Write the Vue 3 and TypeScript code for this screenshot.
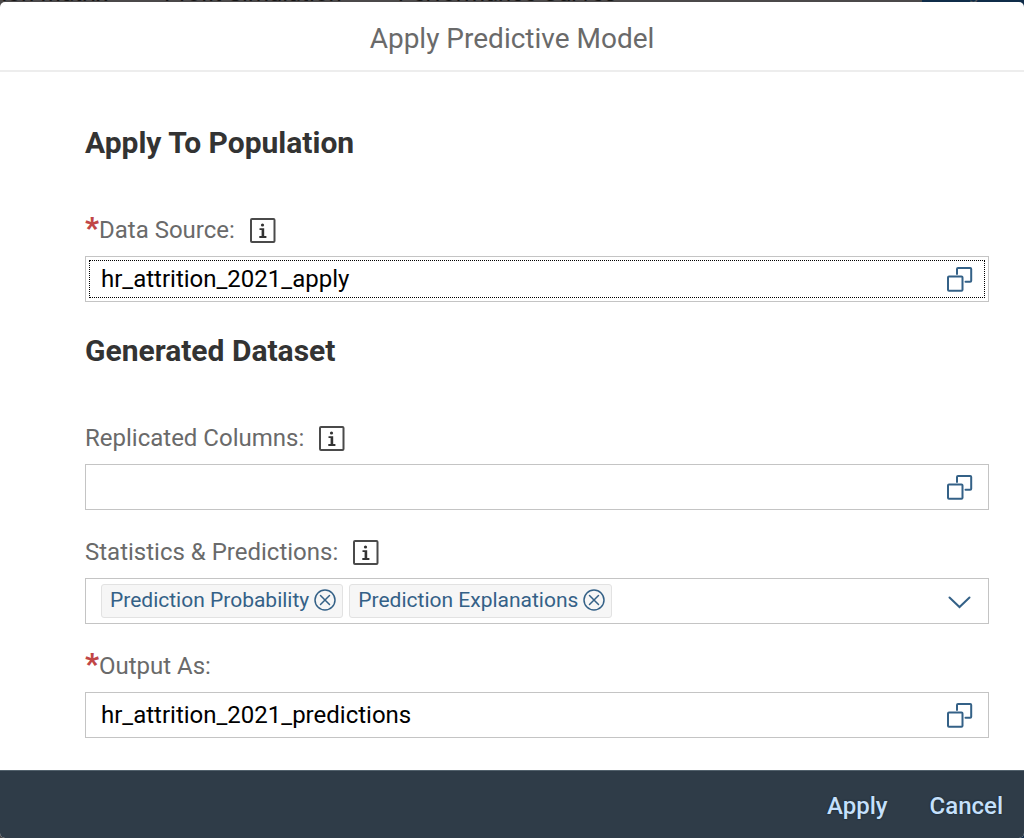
<script setup lang="ts">
import { ref } from 'vue'

interface Token {
  id: number
  text: string
}

const dataSource = ref('hr_attrition_2021_apply')
const replicated = ref('')
const output = ref('hr_attrition_2021_predictions')
const query = ref('')
const tokens = ref<Token[]>([
  { id: 1, text: 'Prediction Probability' },
  { id: 2, text: 'Prediction Explanations' },
])

function removeToken(id: number): void {
  tokens.value = tokens.value.filter((t) => t.id !== id)
}
</script>

<template>
  <div class="page">
    <div class="backdrop" aria-hidden="true">
      <span class="tab tab-first">Confusion Matrix</span>
      <span class="tab">Profit Simulation</span>
      <span class="tab">Performance Curves</span>
      <span class="side">Settings</span>
    </div>

    <form class="dialog" role="dialog" aria-labelledby="dialog-title" @submit.prevent>
      <header class="header">
        <h1 id="dialog-title" class="title">Apply Predictive Model</h1>
      </header>

      <main class="body">
        <section class="section">
          <h2 class="heading">Apply To Population</h2>
          <div class="field">
            <div class="label-row">
              <label for="source"><span class="star">*</span>Data Source:</label>
              <button type="button" class="info" aria-label="About data source">
                <svg viewBox="0 0 26 26" width="26" height="26">
                  <rect class="frame" x="1" y="2" width="23.500" height="23" rx="1" />
                  <circle cx="12.500" cy="8" r="1.600" />
                  <path d="M9.500 11.200h4.700v7.800h2.200v2H9.300v-2h2.300v-5.900H9.500z" />
                </svg>
              </button>
            </div>
            <div class="control focused">
              <input id="source" v-model="dataSource" class="input" type="text" />
              <button type="button" class="action" aria-label="Select data source">
                <svg viewBox="0 0 26 26" width="26" height="26">
                  <path d="M10 8V3a1 1 0 0 1 1-1h12.200a1 1 0 0 1 1 1v11.800a1 1 0 0 1-1 1H18.500" />
                  <rect x="1" y="10.500" width="14.500" height="14.300" rx="1" />
                </svg>
              </button>
            </div>
          </div>
        </section>

        <section class="section">
          <h2 class="heading">Generated Dataset</h2>
          <div class="fields">
            <div class="field">
              <div class="label-row">
                <label for="replicated">Replicated Columns:</label>
                <button type="button" class="info" aria-label="About replicated columns">
                  <svg viewBox="0 0 26 26" width="26" height="26">
                    <rect class="frame" x="1" y="2" width="23.500" height="23" rx="1" />
                    <circle cx="12.500" cy="8" r="1.600" />
                    <path d="M9.500 11.200h4.700v7.800h2.200v2H9.300v-2h2.300v-5.900H9.500z" />
                  </svg>
                </button>
              </div>
              <div class="control">
                <input id="replicated" v-model="replicated" class="input" type="text" />
                <button type="button" class="action" aria-label="Select columns">
                  <svg viewBox="0 0 26 26" width="26" height="26">
                    <path d="M10 8V3a1 1 0 0 1 1-1h12.200a1 1 0 0 1 1 1v11.800a1 1 0 0 1-1 1H18.500" />
                    <rect x="1" y="10.500" width="14.500" height="14.300" rx="1" />
                  </svg>
                </button>
              </div>
            </div>

            <div class="field">
              <div class="label-row">
                <label for="stats">Statistics &amp; Predictions:</label>
                <button type="button" class="info" aria-label="About statistics and predictions">
                  <svg viewBox="0 0 26 26" width="26" height="26">
                    <rect class="frame" x="1" y="2" width="23.500" height="23" rx="1" />
                    <circle cx="12.500" cy="8" r="1.600" />
                    <path d="M9.500 11.200h4.700v7.800h2.200v2H9.300v-2h2.300v-5.900H9.500z" />
                  </svg>
                </button>
              </div>
              <div class="control">
                <ul class="tokens">
                  <li v-for="t in tokens" :key="t.id" class="token">
                    <span>{{ t.text }}</span>
                    <button type="button" class="remove" :aria-label="'Remove ' + t.text" @click="removeToken(t.id)">
                      <svg viewBox="0 0 22 22" width="22" height="22">
                        <circle cx="11" cy="11" r="10" />
                        <path d="M6.500 6.500l9 9M15.500 6.500l-9 9" />
                      </svg>
                    </button>
                  </li>
                </ul>
                <input id="stats" v-model="query" class="input" type="text" />
                <button type="button" class="action" aria-label="Show options">
                  <svg viewBox="0 0 26 26" width="26" height="26">
                    <path d="M2.500 9.500L12.500 19L22.500 9.500" />
                  </svg>
                </button>
              </div>
            </div>

            <div class="field">
              <div class="label-row">
                <label for="output"><span class="star">*</span>Output As:</label>
              </div>
              <div class="control">
                <input id="output" v-model="output" class="input" type="text" />
                <button type="button" class="action" aria-label="Select output location">
                  <svg viewBox="0 0 26 26" width="26" height="26">
                    <path d="M10 8V3a1 1 0 0 1 1-1h12.200a1 1 0 0 1 1 1v11.800a1 1 0 0 1-1 1H18.500" />
                    <rect x="1" y="10.500" width="14.500" height="14.300" rx="1" />
                  </svg>
                </button>
              </div>
            </div>
          </div>
        </section>
      </main>

      <footer class="footer">
        <button type="submit" class="command">Apply</button>
        <button type="button" class="command">Cancel</button>
      </footer>
    </form>
  </div>
</template>

<style>
body {
  margin: 0;
  background: #4b494a;
}
</style>

<style scoped>
.page {
  min-height: 100vh;
  display: grid;
  grid-template-rows: 2px 1fr;
  box-sizing: border-box;
  font-family: Roboto, "Liberation Sans", sans-serif;
  background: linear-gradient(to right, #4b494a 90%, #0f2c49 90%);
}

.backdrop {
  display: flex;
  align-items: flex-end;
  gap: 56px;
  height: 2px;
  overflow: hidden;
  color: #161616;
  font-size: 24px;
  line-height: 18px;
  white-space: nowrap;
}

.tab-first {
  width: 108px;
  display: flex;
  justify-content: flex-end;
}

.side {
  margin-left: auto;
  padding-right: 36px;
  font-size: 18px;
  color: #54585c;
}

.dialog {
  display: flex;
  flex-direction: column;
  margin: 0;
  border-radius: 5px;
  background: #fff;
  overflow: hidden;
}

.header {
  padding: 19px 16px 13px;
  border-bottom: 2px solid #ededed;
  text-align: center;
}

.title {
  margin: 0;
  font-size: 28px;
  line-height: 36px;
  font-weight: 400;
  color: #6a6a6a;
}

.body {
  flex: 1;
  display: flex;
  flex-direction: column;
  gap: 31px;
  padding: 53px 35px 32px 85px;
}

.section {
  display: flex;
  flex-direction: column;
  gap: 51px;
}

.heading {
  margin: 0;
  font-size: 30px;
  line-height: 36px;
  font-weight: 700;
  color: #333;
}

.fields {
  display: flex;
  flex-direction: column;
  gap: 24px;
}

.field {
  display: flex;
  flex-direction: column;
  gap: 8px;
}

.label-row {
  display: flex;
  align-items: center;
  gap: 15px;
  height: 36px;
  font-size: 24px;
  line-height: 36px;
  color: #6a6a6a;
}

.star {
  font-size: 30px;
  line-height: 24px;
  font-weight: 900;
  color: #c14646;
}

button {
  margin: 0;
  padding: 0;
  border: 0;
  background: none;
  font-family: inherit;
  cursor: pointer;
}

svg {
  display: block;
}

.info {
  fill: #333;
}

.frame {
  fill: none;
  stroke: #4a4a4a;
  stroke-width: 2;
}

.control {
  display: flex;
  align-items: center;
  height: 46px;
  box-sizing: border-box;
  padding: 0 15px;
  border: 1px solid #c4c4c4;
  background: #fff;
}

.focused {
  outline: 1px dotted #000;
  outline-offset: -5px;
}

.input {
  flex: 1;
  min-width: 0;
  padding: 0;
  border: 0;
  outline: 0;
  background: transparent;
  font-family: inherit;
  font-size: 24px;
  line-height: 32px;
  color: #000;
}

.action,
.remove {
  fill: none;
  stroke: #346187;
  stroke-width: 2;
  stroke-linecap: round;
}

.tokens {
  display: flex;
  gap: 6px;
  margin: 0;
  padding: 0;
  list-style: none;
}

.token {
  display: flex;
  align-items: center;
  gap: 5px;
  padding: 0 6px 2px 8px;
  border: 1px solid #e2e2e2;
  border-radius: 3px;
  background: #f6f6f6;
  font-size: 21px;
  line-height: 30px;
  color: #346187;
}

.remove {
  stroke-width: 1.5;
}

.footer {
  display: flex;
  align-items: center;
  justify-content: flex-end;
  gap: 42px;
  height: 68px;
  box-sizing: border-box;
  padding: 2px 21px 0;
  border-top: 1px solid #52616c;
  background: #2f3c48;
}

.command {
  font-size: 24px;
  line-height: 36px;
  font-weight: 500;
  color: #c5e0fb;
  text-shadow: 0 0 2px #101c28;
}
</style>
